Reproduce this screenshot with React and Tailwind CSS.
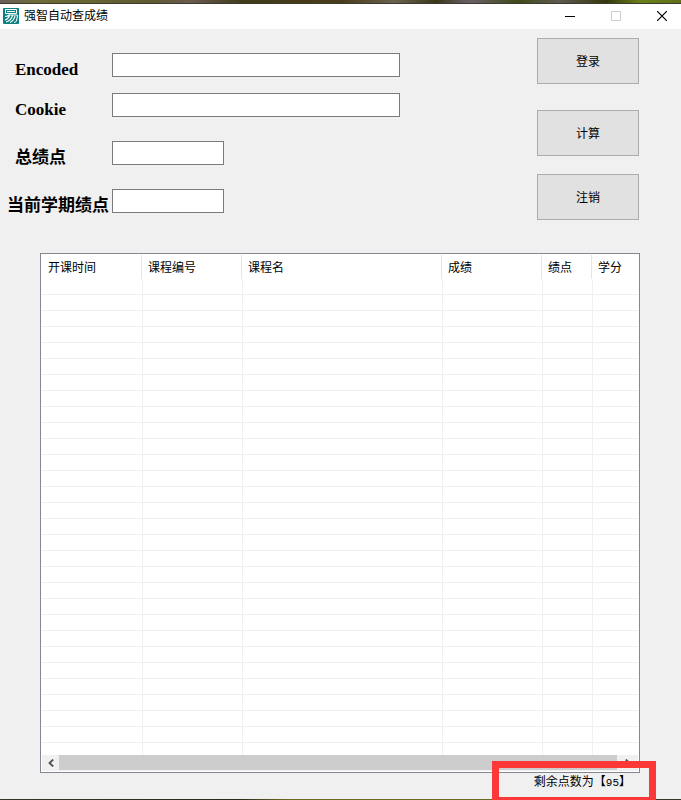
import React, { useState } from 'react';

const fields = [
  { id: 'encoded', label: 'Encoded', row: '', labelPad: 'pl-[15px]', input: 'w-72' },
  { id: 'cookie', label: 'Cookie', row: 'mt-3', labelPad: 'pl-[15px]', input: 'w-72' },
  { id: 'total', label: '总绩点', row: 'mt-5', labelPad: 'pl-[15px]', input: 'w-28' },
  { id: 'current', label: '当前学期绩点', row: 'mt-5', labelPad: 'pl-[7px]', input: 'w-28' },
];

const columns = [
  { title: '开课时间', width: 'w-[100px]' },
  { title: '课程编号', width: 'w-[100px]' },
  { title: '课程名', width: 'w-[200px]' },
  { title: '成绩', width: 'w-[100px]' },
  { title: '绩点', width: 'w-[50px]' },
  { title: '学分', width: '' },
];

const emptyRows = Array.from({ length: 30 });

const AppIcon = () => (
  <svg className="w-4 h-4" viewBox="0 0 16 16" fill="none">
    <rect width="16" height="16" rx="1" fill="#0a8080" />
    <path d="M2.5 1.5h11v4h-11zM4 3.5h8" stroke="#fff" />
    <path
      d="M2 8.5c2 0 3-.5 4-1.5h7.5c1 0 1 1 .8 2l-.8 3.5c-.3 1.5-1 2-2.5 2M6.5 7.5c-.5 2-2 3.500-4.500 4.500M9.500 7.500c-.8 3-3 5.500-6.500 6.500M12 8c-.8 3-2.500 5.500-5 6.500"
      stroke="#fff"
      strokeWidth="1.1"
    />
  </svg>
);

const TitleBar = () => (
  <header className="flex items-start justify-between h-[25px] bg-white">
    <div className="flex items-center gap-[5px] h-6 pl-[3px]">
      <AppIcon />
      <h1 className="text-xs">强智自动查成绩</h1>
    </div>
    <div className="flex gap-2">
      <button aria-label="最小化" className="flex items-center justify-center w-[38px] h-6">
        <svg className="w-[10px] h-[10px]" viewBox="0 0 10 10" shapeRendering="crispEdges">
          <path d="M0 5.5h10" stroke="#000" />
        </svg>
      </button>
      <button aria-label="最大化" disabled className="flex items-center justify-center w-[38px] h-6">
        <svg className="w-[10px] h-[10px]" viewBox="0 0 10 10" fill="none" shapeRendering="crispEdges">
          <path d="M.5 .5h9v9h-9z" stroke="#ccc" />
        </svg>
      </button>
      <button aria-label="关闭" className="flex items-center justify-center w-[38px] h-6">
        <svg className="w-[10px] h-[10px]" viewBox="0 0 10 10">
          <path d="M0 0 10 10M10 0 0 10" stroke="#000" strokeWidth="1.2" />
        </svg>
      </button>
    </div>
  </header>
);

const GradeTable = () => (
  <section className="ml-10 mr-[41px] mt-[33px] p-px bg-white border border-[#828790]">
    <table className="w-full table-fixed border-separate border-spacing-0">
      <thead>
        <tr className="h-6">
          {columns.map((col, i) => (
            <th
              key={col.title}
              scope="col"
              className={`${col.width} h-6 p-0 pt-[2px] pl-[6px] text-left text-xs font-normal ${
                i < columns.length - 1 ? 'border-r border-[#e5e5e5]' : ''
              }`}
            >
              {col.title}
            </th>
          ))}
        </tr>
      </thead>
      <tbody>
        {emptyRows.map((_, r) => (
          <tr key={r}>
            {columns.map((col, i) => (
              <td
                key={col.title}
                className={`p-0 border-[#f0f0f0] ${r < emptyRows.length - 1 ? 'h-4 border-b' : 'h-3'} ${
                  i > 0 ? 'border-l' : ''
                }`}
              />
            ))}
          </tr>
        ))}
      </tbody>
    </table>
    <div className="flex h-4 bg-[#f0f0f0]">
      <button aria-label="向左滚动" className="flex items-center justify-center w-[17px]">
        <svg className="w-[6px] h-2" viewBox="0 0 6 8" fill="none">
          <path d="M5.2 .5 1.5 4l3.700 3.500" stroke="#505050" strokeWidth="1.8" />
        </svg>
      </button>
      <div className="flex-1 h-[15px] bg-[#cdcdcd]" />
      <button aria-label="向右滚动" className="flex items-center justify-center w-[21px]">
        <svg className="w-[6px] h-2" viewBox="0 0 6 8" fill="none">
          <path d="M.8 .5 4.5 4 .8 7.5" stroke="#505050" strokeWidth="1.8" />
        </svg>
      </button>
    </div>
  </section>
);

const App = () => {
  const [values, setValues] = useState({ encoded: '', cookie: '', total: '', current: '' });

  const handleChange = (e) => {
    setValues({ ...values, [e.target.id]: e.target.value });
  };

  return (
    <div className="bg-[#f0f0f0] text-black font-['Liberation_Sans','Noto_Sans_CJK_SC',sans-serif]">
      {/* sliver of desktop above the window */}
      <div className="h-1 border-b border-[#3c3a30] bg-[linear-gradient(to_right,#6b5f5a,#6f6b35_6%,#5f5a30_22%,#6a5a50_28%,#3f3a18_36%,#4a3c1a_50%,#6a6250_58%,#3a3818_64%,#6a6068_69%,#3f4a18_76%,#5f5a50_82%,#33380c_89%,#6a8018_94%,#5f7018)]" />
      <TitleBar />

      <main>
        <form className="flex justify-between pt-[9px] pr-[42px]" onSubmit={(e) => e.preventDefault()}>
          <div className="pt-[15px]">
            {fields.map((field) => (
              <div key={field.id} className={`flex items-start h-7 ${field.row}`}>
                <label
                  htmlFor={field.id}
                  className={`w-28 pt-[5px] text-[17px] leading-6 font-bold whitespace-nowrap font-['Liberation_Serif','Noto_Sans_CJK_SC',serif] ${field.labelPad}`}
                >
                  {field.label}
                </label>
                <input
                  id={field.id}
                  type="text"
                  value={values[field.id]}
                  onChange={handleChange}
                  className={`h-6 px-1 text-xs bg-white border border-[#7a7a7a] ${field.input}`}
                />
              </div>
            ))}
          </div>
          <div className="flex flex-col">
            <button className="w-[102px] h-[46px] pt-[2px] text-xs bg-[#e1e1e1] border border-[#adadad]">登录</button>
            <button className="w-[102px] h-[46px] pt-[2px] mt-[26px] text-xs bg-[#e1e1e1] border border-[#adadad]">计算</button>
            <button className="w-[102px] h-[46px] pt-[2px] mt-[18px] text-xs bg-[#e1e1e1] border border-[#adadad]">注销</button>
          </div>
        </form>

        <GradeTable />
      </main>

      <footer className="relative flex justify-end h-[26px] pt-px pr-[50px]">
        <p className="text-xs leading-4">
          剩余点数为【<span className="text-[11px] font-['Liberation_Mono',monospace]">95</span>】
        </p>
        <div className="absolute -top-3 -bottom-px right-[25px] w-[164px] border-[7px] border-b-[3px] border-[#fc3838]" />
      </footer>
      <div className="h-px bg-[linear-gradient(to_right,#35352a,#2a2a1c_35%,#6a6a20_42%,#6a6a20_72%,#35352a_95%)]" />
    </div>
  );
};

export default App;
